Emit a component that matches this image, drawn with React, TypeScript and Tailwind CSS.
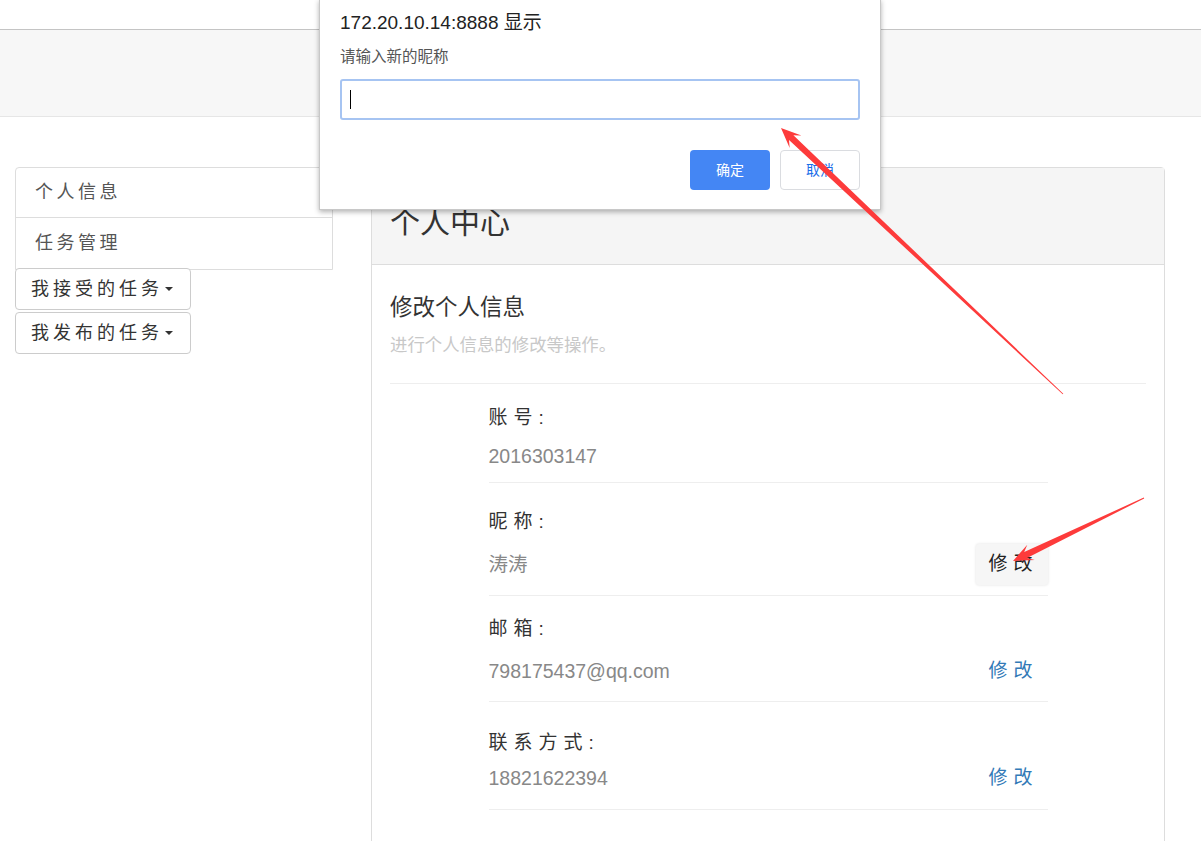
import React from "react";

function arrowPoints(tx: number, ty: number, px: number, py: number) {
  const dx = px - tx;
  const dy = py - ty;
  const L = Math.hypot(dx, dy);
  const ux = dx / L;
  const uy = dy / L;
  const nx = -uy;
  const ny = ux;
  const hl = 20;
  const hw = 17;
  const sw = 6.5;
  const notch = 14;
  const bx = px - ux * notch;
  const by = py - uy * notch;
  const wx = px - ux * hl;
  const wy = py - uy * hl;
  const f = (a: number, b: number) => `${a.toFixed(1)},${b.toFixed(1)}`;
  return [
    f(tx + nx * 0.4, ty + ny * 0.4),
    f(bx + (nx * sw) / 2, by + (ny * sw) / 2),
    f(wx + (nx * hw) / 2, wy + (ny * hw) / 2),
    f(px, py),
    f(wx - (nx * hw) / 2, wy - (ny * hw) / 2),
    f(bx - (nx * sw) / 2, by - (ny * sw) / 2),
    f(tx - nx * 0.4, ty - ny * 0.4),
  ].join(" ");
}

type Row = {
  label: string;
  value: string;
  pt: string;
  mt: string;
  pb: string;
  action: "none" | "hover" | "link";
};

const rows: Row[] = [
  { label: "账号:", value: "2016303147", pt: "pt-[22px]", mt: "mt-[6px]", pb: "pb-[5px]", action: "none" },
  { label: "昵称:", value: "涛涛", pt: "pt-[27px]", mt: "mt-[10px]", pb: "pb-[10px]", action: "hover" },
  { label: "邮箱:", value: "798175437@qq.com", pt: "pt-[21px]", mt: "mt-[10px]", pb: "pb-[9px]", action: "link" },
  { label: "联系方式:", value: "18821622394", pt: "pt-[29px]", mt: "mt-[3px]", pb: "pb-[10px]", action: "link" },
];

function Caret() {
  return (
    <span className="ml-[2px] inline-block h-0 w-0 border-l-[4px] border-r-[4px] border-t-[4px] border-l-transparent border-r-transparent border-t-[#333]" />
  );
}

export default function App() {
  return (
    <div className="relative h-[841px] w-[1201px] overflow-hidden bg-white font-['Liberation_Sans','Noto_Sans_CJK_SC',sans-serif]">
      {/* top strip */}
      <div className="h-[30px] border-b border-[#c4c4c4] bg-white" />
      {/* navbar */}
      <div className="h-[87px] border-b border-[#e6e6e6] bg-[#f7f7f7]" />

      <div className="flex pl-[15px] pt-[50px]">
        {/* sidebar */}
        <aside className="w-[318px]">
          <div className="rounded-t-[4px] border border-[#dddddd] bg-white">
            <div className="flex h-[50px] items-center border-b border-[#dddddd] pl-[19px] text-[18px] tracking-[3.5px] text-[#555]">
              个人信息
            </div>
            <div className="flex h-[51px] items-center pl-[19px] text-[18px] tracking-[3.5px] text-[#555]">
              任务管理
            </div>
          </div>
          <div className="mt-[-2px] flex flex-col gap-[2px]">
            <button className="flex h-[42px] w-[176px] items-center rounded-[4px] border border-[#cccccc] bg-white pl-[15px] text-[18px] tracking-[4px] text-[#333]">
              我接受的任务
              <Caret />
            </button>
            <button className="flex h-[42px] w-[176px] items-center rounded-[4px] border border-[#cccccc] bg-white pl-[15px] text-[18px] tracking-[4px] text-[#333]">
              我发布的任务
              <Caret />
            </button>
          </div>
        </aside>

        {/* main panel */}
        <main className="ml-[38px] w-[794px] rounded-t-[4px] border border-[#dddddd] pb-[80px]">
          <div className="flex h-[97px] items-center border-b border-[#dddddd] bg-[#f5f5f5] px-[18px] pt-[12px] text-[30px] text-[#333]">
            个人中心
          </div>
          <div className="px-[18px]">
            <div className="mt-[28px] h-[30px] text-[22.5px] leading-[30px] text-[#333]">修改个人信息</div>
            <div className="mt-[10px] h-[24px] text-[17.4px] leading-[24px] text-[#c8c8c8]">进行个人信息的修改等操作。</div>
            <div className="mt-[26px] border-t border-[#eeeeee]" />
            <div className="mx-auto w-[559px]">
              {rows.map((r) => (
                <div key={r.label} className={`${r.pt} ${r.pb} border-b border-[#eeeeee]`}>
                  <div className="h-[24px] text-[19px] leading-[24px] tracking-[6px] text-[#333]">{r.label}</div>
                  <div className={`${r.mt} flex h-[41px] items-center justify-between`}>
                    <span className="text-[19.5px] text-[#888]">{r.value}</span>
                    {r.action === "hover" && (
                      <span className="flex h-[41px] w-[72px] items-center rounded-[3px] bg-[#f6f6f6] pl-[13px] text-[19px] tracking-[6px] text-[#222] shadow-[0_0_3px_rgba(0,0,0,0.12)]">
                        修改
                      </span>
                    )}
                    {r.action === "link" && (
                      <span className="flex h-[41px] w-[72px] items-center pl-[13px] text-[19px] tracking-[6px] text-[#337ab7]">
                        修改
                      </span>
                    )}
                  </div>
                </div>
              ))}
            </div>
          </div>
        </main>
      </div>

      {/* prompt dialog */}
      <div className="absolute left-[319px] top-[-1px] w-[562px] border border-[#c8c8c8] bg-white px-[20px] pb-[19px] pt-[11px] shadow-[0_2px_5px_rgba(0,0,0,0.3)]">
        <div className="h-[24px] text-[19px] leading-[24px] text-[#222]">172.20.10.14:8888 显示</div>
        <div className="mt-[12px] h-[20px] text-[15.5px] leading-[20px] text-[#555]">请输入新的昵称</div>
        <div className="mt-[12px] flex h-[41px] items-center rounded-[3px] border-2 border-[#a6c4f2] pl-[8px]">
          <div className="h-[19px] w-[1px] bg-black" />
        </div>
        <div className="mt-[30px] flex justify-end gap-[10px]">
          <button className="flex h-[40px] w-[80px] items-center justify-center rounded-[4px] bg-[#4486f4] text-[14px] text-white">
            确定
          </button>
          <button className="flex h-[40px] w-[80px] items-center justify-center rounded-[4px] border border-[#dadce0] bg-white text-[14px] text-[#1a6ee8]">
            取消
          </button>
        </div>
      </div>

      {/* annotation arrows */}
      <svg className="pointer-events-none absolute left-0 top-0" width="1201" height="841" viewBox="0 0 1201 841">
        <polygon points={arrowPoints(1063, 394, 781, 128)} fill="#fd3b3b" />
        <polygon points={arrowPoints(1144, 498, 1013, 561)} fill="#fd3b3b" />
      </svg>
    </div>
  );
}
